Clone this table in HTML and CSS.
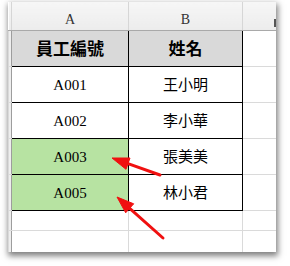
FILE: index.html
```html
<!DOCTYPE html>
<html lang="zh-Hant">
<head>
<meta charset="utf-8">
<title>員工名單</title>
<link rel="stylesheet" href="styles.css">
</head>
<body>
<div class="sheet">
  <table class="grid">
    <colgroup>
      <col class="w-stub"><col class="w-a"><col class="w-b"><col class="w-c">
    </colgroup>
    <thead>
      <tr class="col-head">
        <th class="stub"></th><th>A</th><th>B</th><th class="last"></th>
      </tr>
    </thead>
    <tbody>
      <tr class="row-tall">
        <td class="stub"></td><td class="cell title">員工編號</td><td class="cell title">姓名</td><td class="blank"></td>
      </tr>
      <tr class="row-tall">
        <td class="stub"></td><td class="cell code">A001</td><td class="cell name">王小明</td><td class="blank"></td>
      </tr>
      <tr class="row-tall">
        <td class="stub"></td><td class="cell code">A002</td><td class="cell name">李小華</td><td class="blank"></td>
      </tr>
      <tr class="row-tall">
        <td class="stub"></td><td class="cell code marked">A003</td><td class="cell name">張美美</td><td class="blank"></td>
      </tr>
      <tr class="row-tall">
        <td class="stub"></td><td class="cell code marked">A005</td><td class="cell name">林小君</td><td class="blank"></td>
      </tr>
      <tr class="row-short">
        <td class="stub"></td><td class="blank"></td><td class="blank"></td><td class="blank"></td>
      </tr>
      <tr class="row-last">
        <td class="stub"></td><td class="blank"></td><td class="blank"></td><td class="blank"></td>
      </tr>
    </tbody>
  </table>
  <svg class="arrows" width="290" height="266" viewBox="0 0 290 266" aria-hidden="true">
    <g fill="#f01010" stroke="#f01010">
      <line x1="128" y1="163.7" x2="160" y2="175" stroke-width="3" stroke-linecap="round"/>
      <polygon points="112,158 126,169.3 130,158" stroke-width="1" stroke-linejoin="round"/>
      <line x1="129.7" y1="208.3" x2="163" y2="238" stroke-width="3" stroke-linecap="round"/>
      <polygon points="117,197 125.7,212.8 133.7,203.8" stroke-width="1" stroke-linejoin="round"/>
    </g>
  </svg>
</div>
</body>
</html>
```

FILE: styles.css
```css
html, body {
  margin: 0;
  padding: 0;
  background: #ffffff;
}

body {
  width: 290px;
  height: 266px;
  overflow: hidden;
}

.sheet {
  position: relative;
  margin: 2px 0 0 8px;
  width: 268px;
  height: 250px;
  overflow: hidden;
  background: #ffffff;
  box-shadow: 1px 3px 6px 1px rgba(0, 0, 0, 0.5);
}

.grid {
  border-collapse: collapse;
  table-layout: fixed;
  width: 268px;
}

.w-stub { width: 3px; }
.w-a { width: 117px; }
.w-b { width: 114px; }
.w-c { width: 34px; }

.col-head { height: 28px; }

.col-head th {
  padding: 0;
  background: linear-gradient(#f6f6f6, #ececec);
  border-right: 1px solid #d6d6d6;
  border-bottom: 1px solid #a9a9a9;
  font-family: "Liberation Serif", "DejaVu Serif", serif;
  font-weight: normal;
  font-size: 14px;
  color: #333333;
  vertical-align: bottom;
  line-height: 20px;
}

.col-head th.last {
  position: relative;
}

.col-head th.last::after {
  content: "";
  position: absolute;
  right: 0;
  top: 17px;
  width: 2px;
  height: 8px;
  background: #555;
}

.stub {
  padding: 0;
  background: #eeeeee;
  border-right: 1px solid #9d9d9d;
}

td {
  padding: 0;
  border: 1px solid #dadada;
  line-height: 20px;
}

.row-tall { height: 36px; }
.row-short { height: 20px; }
.row-last { height: 22px; }

.cell {
  border: 1px solid #000;
  text-align: center;
  vertical-align: middle;
  color: #000;
  font-family: "Liberation Serif", "Noto Sans CJK TC", serif;
  font-size: 15px;
}

.title {
  background: #d9d9d9;
  font-family: "Noto Sans CJK TC", sans-serif;
  font-weight: 700;
  font-size: 17px;
}

.name {
  font-family: "Noto Sans CJK TC", sans-serif;
  font-size: 15px;
}

.code {
  padding-top: 2px;
}

.marked {
  background: #b7e3a2;
}

.arrows {
  position: absolute;
  left: -8px;
  top: -2px;
  pointer-events: none;
}
```
